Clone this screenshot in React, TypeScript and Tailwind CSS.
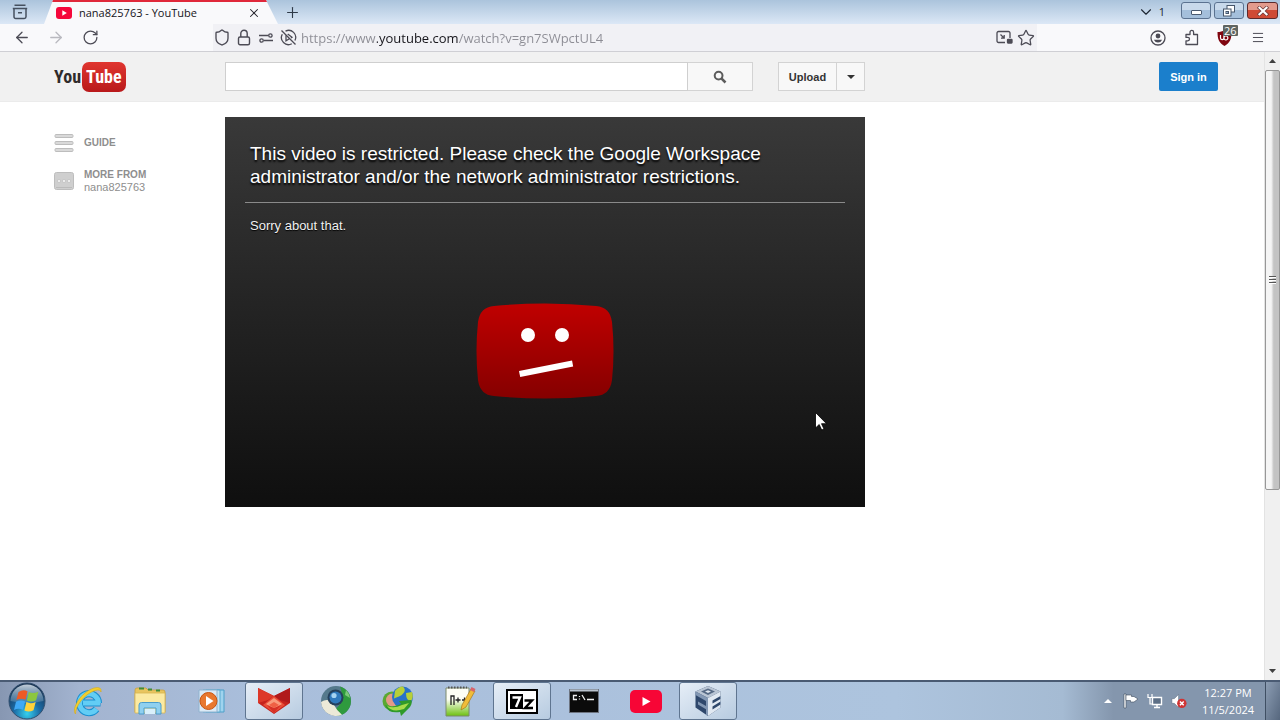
import type { ReactNode } from "react";
import {
  ArrowLeft,
  ArrowRight,
  ChevronDown,
  Lock,
  Menu,
  Plus,
  RotateCw,
  Shield,
  Star,
  X,
} from "lucide-react";

const uiFont = "font-['Open_Sans','Noto_Sans',sans-serif]";
const pageFont = "font-['Liberation_Sans',Arial,sans-serif]";

interface IconButtonProps {
  label: string;
  className?: string;
  children?: ReactNode;
}

function IconButton({ label, className = "", children }: IconButtonProps) {
  return (
    <button
      type="button"
      aria-label={label}
      className={`flex shrink-0 items-center justify-center ${className}`}
    >
      {children}
    </button>
  );
}

function TabStrip() {
  return (
    <div className="flex h-6 shrink-0 items-stretch bg-linear-to-b from-[#abc4dc] to-[#dce8f6]">
      <IconButton label="Recent browsing" className="w-10 text-[#45505f]">
        <svg width="18" height="16" viewBox="0 0 18 16" fill="none" stroke="currentColor" strokeWidth="1.5">
          <path d="M3.5 1.2h11M1.8 4.5h14.4M3 4.5v8.3a1.7 1.7 0 0 0 1.7 1.7h8.6a1.7 1.7 0 0 0 1.7-1.7V4.5M7 8.8h4" />
        </svg>
      </IconButton>
      <div className="ml-1 flex w-[234px] items-center border-t-2 border-[#e0283a] bg-[#f9f9fb] pr-4 pl-3 [clip-path:polygon(9px_0,222px_0,100%_100%,0_100%)]">
        <svg width="16" height="12" viewBox="0 0 16 12" className="shrink-0">
          <rect width="16" height="12" rx="3" fill="#f5073b" />
          <path d="M6.3 3.3v5.4l4.5-2.7z" fill="#fff" />
        </svg>
        <span className="ml-[7px] flex-1 text-[11px] whitespace-nowrap text-[#15141a]">
          nana825763 - YouTube
        </span>
        <IconButton label="Close tab" className="size-4 text-[#25242c]">
          <X size={14} strokeWidth={1.8} />
        </IconButton>
      </div>
      <IconButton label="New tab" className="ml-1 w-5 text-[#2f3a48]">
        <Plus size={17} strokeWidth={1.6} />
      </IconButton>
      <div className="flex-1" />
      <button type="button" className="mr-4 flex items-center gap-1 text-[11px] text-[#1d2632]">
        <ChevronDown size={18} strokeWidth={1.5} />
        1
      </button>
      <div className="flex gap-[3px] pt-[2px] pr-[2px]">
        <IconButton
          label="Minimize"
          className="h-[17px] w-[30px] rounded-[3px] border border-[#5b7290] bg-linear-to-b from-[#c8d9eb] from-50% to-[#a4bfdb] to-50%"
        >
          <span className="mt-1 h-[5px] w-[11px] rounded-[1px] border border-[#4a5a70] bg-white" />
        </IconButton>
        <IconButton
          label="Restore"
          className="h-[17px] w-[30px] rounded-[3px] border border-[#5b7290] bg-linear-to-b from-[#c8d9eb] from-50% to-[#a4bfdb] to-50%"
        >
          <svg width="12" height="12" viewBox="0 0 12 12" fill="#fff" stroke="#46566b">
            <rect x="4" y="0.5" width="7.5" height="6.5" />
            <rect x="0.5" y="4" width="7.5" height="7" />
            <rect x="3" y="6.5" width="2.5" height="2" fill="#8fa9c6" />
          </svg>
        </IconButton>
        <IconButton
          label="Close window"
          className="h-[17px] w-[31px] rounded-[3px] border border-[#5c2a2c] bg-linear-to-b from-[#e39a8c] from-50% to-[#cf4a35] to-50%"
        >
          <svg width="12" height="10" viewBox="0 0 12 10" strokeLinecap="square">
            <path d="M2.5 1.8l7 6.4M9.5 1.8l-7 6.4" stroke="#6f3b3b" strokeWidth="3.6" />
            <path d="M2.5 1.8l7 6.4M9.5 1.8l-7 6.4" stroke="#fff" strokeWidth="2.2" />
          </svg>
        </IconButton>
      </div>
    </div>
  );
}

function AddressBar() {
  return (
    <div className="flex h-7 shrink-0 items-stretch border-b border-[#cfcfd4] bg-[#f9f9fb] text-[#4c4b55]">
      <div className="flex w-[213px] shrink-0 items-center pl-[13px]">
        <IconButton label="Back" className="w-[18px]">
          <ArrowLeft size={19} strokeWidth={1.7} />
        </IconButton>
        <IconButton label="Forward" className="ml-4 w-[18px] text-[#b9b9bf]">
          <ArrowRight size={19} strokeWidth={1.7} />
        </IconButton>
        <IconButton label="Reload" className="ml-4 w-[18px]">
          <RotateCw size={17} strokeWidth={1.8} />
        </IconButton>
      </div>
      <div className="flex flex-1 items-center gap-1 bg-[#f1f1f5]">
        <IconButton label="Tracking protection" className="w-[18px]">
          <Shield size={19} strokeWidth={1.8} />
        </IconButton>
        <IconButton label="Site information" className="w-[18px]">
          <svg width="14" height="17" viewBox="0 0 14 17" fill="none" stroke="currentColor" strokeWidth="1.4">
            <rect x="1.5" y="8" width="11" height="7.8" rx="1.5" />
            <path d="M3.8 8V4.4a3.2 3.2 0 0 1 6.4 0V8" />
          </svg>
        </IconButton>
        <IconButton label="Permissions" className="w-[18px]">
          <svg width="16" height="12" viewBox="0 0 16 12" fill="none" stroke="currentColor" strokeWidth="1.3">
            <path d="M1 3.5h9M6 8.5h9" />
            <circle cx="12.4" cy="3.5" r="1.7" />
            <circle cx="3.6" cy="8.5" r="1.7" />
          </svg>
        </IconButton>
        <IconButton label="Autoplay blocked" className="w-[18px]">
          <svg width="17" height="17" viewBox="0 0 17 17" fill="none" stroke="currentColor" strokeWidth="1.3">
            <path d="M5.5 2.1A7 7 0 0 1 14.900 11.500M11.800 14.700A7 7 0 0 1 2.300 5.200M1.500 1.500l14 14" />
            <path d="M6 6.200v5.600l3.400-2.100M7.700 5l4.300 3.200-1 .8" />
          </svg>
        </IconButton>
        {/* the host name is darker than the rest of the address */}
        <input
          type="text"
          aria-label="Address"
          defaultValue="https://www.youtube.com/watch?v=gn7SWpctUL4"
          className="min-w-0 flex-1 bg-[linear-gradient(90deg,#8c8c94_76px,#15141a_76px,#15141a_158px,#8c8c94_158px)] bg-clip-text pt-[2px] text-[13px] text-transparent outline-none"
        />
        <IconButton label="Picture in picture" className="w-[18px]">
          <svg width="17" height="15" viewBox="0 0 17 15" fill="none" stroke="currentColor" strokeWidth="1.3">
            <path d="M9 12.500H2.500A1.500 1.500 0 0 1 1 11V3a1.500 1.500 0 0 1 1.500-1.500h10A1.500 1.500 0 0 1 14 3v5M4.500 4.500l3.500 3.500M8.200 5v3.200H5" />
            <rect x="11.500" y="9.500" width="4.500" height="3.500" rx="0.500" fill="currentColor" />
          </svg>
        </IconButton>
        <IconButton label="Bookmark this page" className="mr-[2px] w-[18px]">
          <Star size={18} strokeWidth={1.7} />
        </IconButton>
      </div>
      <div className="flex w-[243px] shrink-0 items-center justify-end gap-4 pr-[15px]">
        <IconButton label="Account" className="w-[18px]">
          <svg width="16" height="16" viewBox="0 0 16 16" fill="none" stroke="currentColor" strokeWidth="1.300">
            <circle cx="8" cy="8" r="7" />
            <circle cx="8" cy="6" r="2.400" fill="currentColor" stroke="none" />
            <path d="M3.800 9.800h8.400a4.600 4.600 0 0 1-8.400 0z" fill="currentColor" stroke="none" />
          </svg>
        </IconButton>
        <IconButton label="Extensions" className="w-[18px]">
          <svg width="16" height="17" viewBox="0 0 16 17" fill="none" stroke="currentColor" strokeWidth="1.300">
            <path d="M2 15.500v-3.700h1.800a1.700 1.700 0 0 0 0-3.400H2V5.500h4V3.200a1.800 1.800 0 0 1 3.600 0v2.300h3.900v10z" strokeLinejoin="round" />
          </svg>
        </IconButton>
        <div className="relative flex w-[18px] shrink-0">
          <IconButton label="uBlock Origin" className="w-[15px]">
            <svg width="15" height="16" viewBox="0 0 14 16">
              <path d="M7 0c2 1.500 4.500 2 7 2 0 7-1.500 11-7 14C1.500 13 0 9 0 2c2.500 0 5-.5 7-2z" fill="#800610" />
              <path d="M3 5v3a1.700 1.700 0 0 0 3.400 0V5M6.400 8a2 2 0 1 0 4 0 2 2 0 0 0-4 0" fill="none" stroke="#fff" strokeWidth="1.200" />
            </svg>
          </IconButton>
          <span className="absolute -top-[5px] left-[6px] rounded-[1px] bg-[#5f6561] px-[1px] text-[11px] leading-[11px] text-white">
            26
          </span>
        </div>
        <IconButton label="Open application menu" className="w-[14px]">
          <Menu size={17} strokeWidth={1.700} />
        </IconButton>
      </div>
    </div>
  );
}

function SiteHeader() {
  return (
    <header className="flex h-[50px] shrink-0 items-center border-b border-[#ebebeb] bg-[#f1f1f1] pr-[46px] pl-[54px]">
      <a
        href="#"
        aria-label="YouTube home"
        className="flex w-[171px] shrink-0 items-center gap-[1px] font-['Liberation_Sans_Narrow','Roboto_Condensed',sans-serif] text-[18px] leading-[30px] font-bold"
      >
        <span className="text-[#2f2b2b]">You</span>
        <span className="rounded-[7px] bg-linear-to-b from-[#e0352f] to-[#b9191b] px-1 text-white">
          Tube
        </span>
      </a>
      <form className="flex h-[29px] w-[528px]" onSubmit={(e) => e.preventDefault()}>
        <input
          type="text"
          aria-label="Search"
          className="min-w-0 flex-1 border border-[#cfcfcf] bg-white px-2 text-sm outline-none"
        />
        <button
          type="submit"
          aria-label="Submit search"
          className="flex w-[65px] items-center justify-center border border-l-0 border-[#d3d3d3] bg-[#f8f8f8]"
        >
          <svg width="14" height="14" viewBox="0 0 14 14" fill="none" stroke="#5c5c5c">
            <circle cx="5.600" cy="5.600" r="3.900" strokeWidth="2" />
            <path d="M8.600 8.600l3.900 3.900" strokeWidth="2.600" />
          </svg>
        </button>
      </form>
      <div className="ml-[25px] flex h-[29px] shrink-0 border border-[#d3d3d3] bg-[#f8f8f8]">
        <button type="button" className="w-[58px] border-r border-[#d3d3d3] pt-px text-[11px] font-bold text-[#333]">
          Upload
        </button>
        <IconButton label="Upload options" className="w-[27px]">
          <svg width="8" height="4" viewBox="0 0 8 4">
            <path d="M0 0h8L4 4z" fill="#333" />
          </svg>
        </IconButton>
      </div>
      <button
        type="button"
        className="ml-auto h-[29px] w-[59px] shrink-0 rounded-[2px] bg-[#1b7fcc] pt-px text-[11px] font-bold text-white"
      >
        Sign in
      </button>
    </header>
  );
}

function GuideNav() {
  return (
    <nav className="flex w-[171px] shrink-0 flex-col gap-4 pt-4 text-[11px] leading-3 text-[#8e8e8e]">
      <a href="#" className="flex h-5 items-center gap-[10px] text-[10px] font-bold">
        <svg width="20" height="18" viewBox="0 0 20 18" fill="#d9d9d9" stroke="#bdbdbd">
          <rect x="1" y="0.500" width="18" height="3" rx="1" />
          <rect x="1" y="7.500" width="18" height="3" rx="1" />
          <rect x="1" y="14.500" width="18" height="3" rx="1" />
        </svg>
        GUIDE
      </a>
      <a href="#" className="flex items-center gap-[10px]">
        <svg width="20" height="18" viewBox="0 0 20 18">
          <rect x="0.500" y="0.500" width="19" height="17" rx="2" fill="#cfcfcf" stroke="#bdbdbd" />
          <path d="M2 15.500h16" stroke="#bbb" />
          <circle cx="5" cy="9" r="1.700" fill="#ececec" stroke="#b3b3b3" strokeWidth="0.500" />
          <circle cx="10" cy="9" r="1.700" fill="#ececec" stroke="#b3b3b3" strokeWidth="0.500" />
          <circle cx="15" cy="9" r="1.700" fill="#ececec" stroke="#b3b3b3" strokeWidth="0.500" />
        </svg>
        <span>
          <span className="block text-[10px] leading-3 font-bold">MORE FROM</span>
          <span className="block">nana825763</span>
        </span>
      </a>
    </nav>
  );
}

function Player() {
  return (
    <section className="flex h-[390px] w-[640px] shrink-0 flex-col bg-linear-to-b from-[#393939] to-[#0f0f0f] px-5 pt-[25px] text-white">
      <h1 className="border-b border-[#8a8a8a] px-[5px] pb-[14px] text-[19px] leading-[23px] [text-shadow:0_2px_2px_#000]">
        This video is restricted. Please check the Google Workspace
        <br />
        administrator and/or the network administrator restrictions.
      </h1>
      <p className="px-[5px] pt-[15px] text-[13px] leading-4 text-[#f1f1f1] [text-shadow:0_1px_1px_#000]">
        Sorry about that.
      </p>
      <svg width="138" height="98" viewBox="0 0 138 98" className="mt-[68px] self-center">
        <defs>
          <linearGradient id="face" x1="0" y1="0" x2="0" y2="1">
            <stop offset="0" stopColor="#c00000" />
            <stop offset="1" stopColor="#850000" />
          </linearGradient>
        </defs>
        <path
          d="M18 4Q69-1 120 4Q134 5 136 20Q139 49 136 78Q134 93 120 94Q69 99 18 94Q4 93 2 78Q-1 49 2 20Q4 5 18 4z"
          fill="url(#face)"
        />
        <circle cx="52" cy="33" r="7" fill="#fff" />
        <circle cx="86" cy="33" r="7" fill="#fff" />
        <path d="M43 69l53-10.500 1.200 6L44.200 75z" fill="#fff" />
      </svg>
    </section>
  );
}

function Scrollbar() {
  return (
    <div className="flex w-4 shrink-0 flex-col border-l border-[#e3e3e3] bg-[#f0f0f0]">
      <IconButton label="Scroll up" className="h-[18px]">
        <svg width="7" height="4" viewBox="0 0 7 4">
          <path d="M0 4h7L3.500 0z" fill="#404040" />
        </svg>
      </IconButton>
      <div className="flex flex-1 flex-col">
        <div className="flex h-[71%] flex-col items-center justify-center gap-[1px] rounded-[2px] border border-[#979797] bg-linear-to-r from-[#f5f5f5] from-40% to-[#c3c3c3] to-60%">
          <span className="h-[2px] w-[7px] border-b border-white bg-[#555]" />
          <span className="h-[2px] w-[7px] border-b border-white bg-[#555]" />
          <span className="h-[2px] w-[7px] border-b border-white bg-[#555]" />
        </div>
      </div>
      <IconButton label="Scroll down" className="h-[18px]">
        <svg width="7" height="4" viewBox="0 0 7 4">
          <path d="M0 0h7L3.500 4z" fill="#404040" />
        </svg>
      </IconButton>
    </div>
  );
}

function StartOrb() {
  return (
    <svg width="38" height="38" viewBox="0 0 38 38">
      <defs>
        <radialGradient id="orb" cx="0.5" cy="0.85" r="0.8">
          <stop offset="0" stopColor="#35d0ee" />
          <stop offset="0.45" stopColor="#1b6ca6" />
          <stop offset="1" stopColor="#16304f" />
        </radialGradient>
        <linearGradient id="gloss" x1="0" y1="0" x2="0" y2="1">
          <stop offset="0" stopColor="#dfe9f2" stopOpacity="0.85" />
          <stop offset="1" stopColor="#8fb0c8" stopOpacity="0.3" />
        </linearGradient>
      </defs>
      <circle cx="19" cy="19" r="18" fill="url(#orb)" stroke="#33506f" />
      <path d="M2.5 19a16.5 16.5 0 0 1 33 0Q19 23 2.5 19z" fill="url(#gloss)" />
      <path d="M10.500 10q4.500-3 9-.8l-2 8.600q-4.500-2-9.200.3z" fill="#ee5a24" />
      <path d="M20.800 10q4.500 2.200 9.500-.3l-2.200 8.600q-4.500 2.300-9.300.2z" fill="#8cc63f" />
      <path d="M8 19.800q4.500-2.500 9.100-.4L15 27.800q-4.500-2.200-9 .2z" fill="#3fa9f5" />
      <path d="M18.400 20.100q4.500 2.200 9.300-.2l-2.200 8.400q-4.500 2.400-9.100.3z" fill="#ffd23a" />
    </svg>
  );
}

function IeIcon() {
  return (
    <svg width="32" height="32" viewBox="0 0 32 32" fill="none">
      <path d="M28.500 18H11M26.500 18a9.500 9.500 0 1 0-2 6" stroke="#1a8fd0" strokeWidth="7" />
      <path d="M28 18H11M26.500 18a9.500 9.500 0 1 0-2 6" stroke="#62cdf5" strokeWidth="5" />
      <path d="M3.500 29C-1 24 9 7 22 3q8-2 7 4-.5-3-6-1.500C12 9 3 22 3.500 29z" fill="#f3cf2e" stroke="#d6a91a" strokeWidth="0.6" />
    </svg>
  );
}

function ExplorerIcon() {
  return (
    <svg width="34" height="30" viewBox="0 0 34 30">
      <path d="M2 4q0-2 2-2h9l2 2h15q2 0 2 2v20H2z" fill="#e8c55f" stroke="#c9a03c" strokeWidth="0.8" />
      <path d="M6 2.500h5M15 3.500h4M23 4.500h4" stroke="#3f8d3a" strokeWidth="2" />
      <path d="M2 7h30v20H2z" fill="#fbeaa2" stroke="#d8b552" strokeWidth="0.8" />
      <path d="M6 28V19q0-2.500 2.500-2.500h17q2.500 0 2.500 2.500v9h-5v-6H11v6z" fill="#8fd0ef" stroke="#4a9ccb" />
      <path d="M12 23h10v5H12z" fill="#d9f0fb" />
    </svg>
  );
}

function MediaPlayerIcon() {
  return (
    <svg width="28" height="28" viewBox="0 0 28 28">
      <path d="M8 3h18v22H8z" fill="#9fd3ee" stroke="#4c9fc9" />
      <path d="M5 3h17v22H5z" fill="#c3e5f5" stroke="#5aa9cf" />
      <path d="M1 3h18v22H1z" fill="#dbeaf6" stroke="#8fb2cf" />
      <circle cx="10.500" cy="14" r="8.500" fill="#e8782f" stroke="#c95510" />
      <path d="M8 9v10l7.500-5z" fill="#fff" />
    </svg>
  );
}

function FoxIcon() {
  return (
    <svg width="34" height="28" viewBox="0 0 34 28">
      <path d="M1 1l16 8 16-8v15l-16 11L1 16z" fill="#c5231d" />
      <path d="M1 1l16 8-6 4-10 3z" fill="#dd3829" />
      <path d="M33 1L17 9l6 4 10 3z" fill="#b01a1c" />
      <path d="M17 9l11 9-11 8-11-8z" fill="#ea4c37" />
      <path d="M17 11l8 6-8 5-8-5z" fill="#f99b7c" />
      <path d="M17 15l5 3-5 3-5-3z" fill="#ef6044" />
      <path d="M17 21l7-3-7 8-7-8z" fill="#d63126" />
    </svg>
  );
}

function ProgramGlobeIcon() {
  return (
    <svg width="32" height="32" viewBox="0 0 32 32">
      <circle cx="16" cy="16" r="15" fill="#55798c" />
      <path d="M20 1.500a15 15 0 0 1-2 29.300Q12 30 13 26 26 18 20 1.500z" fill="#2f9a3e" />
      <path d="M26 5a15 15 0 0 1 4 8l-5-3z" fill="#7cc97a" />
      <path d="M1 17q8-5 13 3 3 6 8 9.700A15 15 0 0 1 1 17z" fill="#ece9d8" />
      <circle cx="15.500" cy="12.500" r="8" fill="#25405c" />
      <circle cx="15.500" cy="12.500" r="6" fill="#2f79bd" />
      <circle cx="14" cy="10.500" r="2.600" fill="#a5d3f2" />
    </svg>
  );
}

function DownloadManagerIcon() {
  return (
    <svg width="32" height="32" viewBox="0 0 32 32">
      <circle cx="10" cy="16" r="9.500" fill="#5aa832" />
      <circle cx="10.500" cy="15" r="6.500" fill="#e49a86" />
      <circle cx="20.500" cy="12" r="10.500" fill="#2a72c8" />
      <path d="M13 6q4-5 8-4.500 3 3 1 6t-5 4-5 2zM24 8l6-1q2 5-1 9-5 0-5-8z" fill="#b8cf38" />
      <path d="M3 20q6 4 16-1l-2-3 12-1q2 2-1 7l-9 9-1-4Q6 29 3 20z" fill="#2f9a2a" />
      <path d="M5 21q7 3 15-1l7-2-5 6Q10 28 5 21z" fill="#a6dc4a" />
    </svg>
  );
}

function NotepadIcon() {
  return (
    <svg width="32" height="32" viewBox="0 0 32 32">
      <defs>
        <linearGradient id="note" x1="0" y1="0" x2="0" y2="1">
          <stop offset="0.4" stopColor="#fdfef5" />
          <stop offset="1" stopColor="#6cc010" />
        </linearGradient>
      </defs>
      <path d="M2 3h23v28H2z" fill="url(#note)" stroke="#7c8a6d" />
      <path d="M4 2.500h19" stroke="#555" strokeWidth="2" strokeDasharray="1.5 1.5" />
      <path d="M7 20v-9h3v9M11.500 15h5M14 12.500v5M18 15h5M20.500 12.500v5" stroke="#222" strokeWidth="1.300" fill="none" />
      <path d="M17 25l1-5L27 4l4 2-9 16z" fill="#f0bd3a" stroke="#a87a1b" strokeWidth="0.7" />
      <path d="M26 5l1.500-3 4 2L30 7z" fill="#d7636b" />
    </svg>
  );
}

function SevenZipIcon() {
  return (
    <svg width="32" height="25" viewBox="0 0 32 25">
      <rect x="1" y="1" width="30" height="23" fill="#fff" stroke="#000" strokeWidth="2" />
      <rect x="4" y="5" width="13" height="15" fill="#000" />
      <path d="M6.500 8.500h7.500L10 18" fill="none" stroke="#fff" strokeWidth="2.4" />
      <path d="M18.500 11.500H26l-7 7.500h8" fill="none" stroke="#000" strokeWidth="2.4" />
    </svg>
  );
}

function ConsoleIcon() {
  return (
    <svg width="30" height="24" viewBox="0 0 30 24">
      <rect x="0.5" y="0.5" width="29" height="23" fill="#0b0b0b" stroke="#6d7480" />
      <path d="M1 1.500h28" stroke="#b9c2cd" strokeWidth="2" />
      <path d="M8 6.500H4.500v4H8M10.500 7v1M10.500 9.500v1M13 6l3 5M18 10.500h7" stroke="#eee" strokeWidth="1.300" fill="none" />
    </svg>
  );
}

function YouTubeIcon() {
  return (
    <svg width="32" height="23" viewBox="0 0 32 23">
      <rect width="32" height="23" rx="5" fill="#f70636" />
      <path d="M12.500 7v9l8-4.500z" fill="#fff" />
    </svg>
  );
}

function VirtualBoxIcon() {
  return (
    <svg width="28" height="32" viewBox="0 0 28 32">
      <path d="M14 1l12.500 5.500v16L14 31 1.500 22.500v-16z" fill="#2f486c" />
      <path d="M14 1l12.500 5.500L14 13 1.500 6.500z" fill="#b9c5d4" />
      <path d="M14 3.500l7 3-7 3.500-7-3.500z" fill="#566a85" />
      <path d="M14 5.300l3 1.300-3 1.500-3-1.500z" fill="#dce4ee" />
      <path d="M1.500 6.500L14 13v18l-2-1.300v-5.500l-8-4.700v-3l8 4.500v-5L1.500 10z" fill="#8398b4" />
      <path d="M26.500 6.500L14 13v18l12.500-8.500v-3l-8 5v-3l8-5v-2.500l-8 4.500v-3l8-4.500z" fill="#e1e9f2" />
    </svg>
  );
}

const pinned = [
  { name: "Internet Explorer", icon: <IeIcon />, open: false },
  { name: "Windows Explorer", icon: <ExplorerIcon />, open: false },
  { name: "Windows Media Player", icon: <MediaPlayerIcon />, open: false },
  { name: "Browser", icon: <FoxIcon />, open: true },
  { name: "Web browser", icon: <ProgramGlobeIcon />, open: false },
  { name: "Download manager", icon: <DownloadManagerIcon />, open: false },
  { name: "Text editor", icon: <NotepadIcon />, open: false },
  { name: "7-Zip", icon: <SevenZipIcon />, open: true },
  { name: "Command Prompt", icon: <ConsoleIcon />, open: false },
  { name: "YouTube", icon: <YouTubeIcon />, open: false },
  { name: "VirtualBox", icon: <VirtualBoxIcon />, open: true },
];

function Taskbar() {
  return (
    <footer className="flex h-10 shrink-0 items-stretch border-t-2 border-[#4a5b73] bg-[linear-gradient(90deg,#8797b2,#a3b4d0_80px,#a9bedb_250px,#adc4de_70%,#a5bbd3_83%,#8496ad_87%)]">
      <IconButton label="Start" className="w-[54px]">
        <StartOrb />
      </IconButton>
      <div className="flex gap-1 pl-[5px]">
        {pinned.map((app) => (
          <IconButton
            key={app.name}
            label={app.name}
            className={
              app.open
                ? "w-[58px] rounded-[3px] border border-[#5f7590] bg-linear-to-br from-[#e6eef7] to-[#b7cbe0]"
                : "w-[58px]"
            }
          >
            {app.icon}
          </IconButton>
        ))}
      </div>
      <div className="ml-auto flex items-center gap-2 text-white">
        <IconButton label="Show hidden icons" className="w-[14px]">
          <svg width="8" height="4" viewBox="0 0 8 4">
            <path d="M0 4h8L4 0z" fill="#fff" />
          </svg>
        </IconButton>
        <IconButton label="Action Center" className="w-4">
          <svg width="16" height="16" viewBox="0 0 16 16" fill="#fff" stroke="#3d4a5c" strokeWidth="0.6">
            <path d="M1 1h2v14H1z" />
            <path d="M3 2h5.500v1.500H11l4 2.500-4 3H7.500V7.500H3z" />
          </svg>
        </IconButton>
        <IconButton label="Network" className="w-4">
          <svg width="16" height="16" viewBox="0 0 16 16" fill="none">
            <path d="M5.500 4.500h9v7h-9z" fill="#5d6f86" stroke="#fff" strokeWidth="1.4" />
            <path d="M7 14.500h6M10 12v2.500" stroke="#fff" strokeWidth="1.4" />
            <path d="M1 1v3.500h4V1M3 4.500V11h2" stroke="#fff" strokeWidth="1.2" />
          </svg>
        </IconButton>
        <IconButton label="Volume muted" className="w-4">
          <svg width="17" height="16" viewBox="0 0 17 16">
            <path d="M1 5.500h2.500L8 1v14l-4.500-4.500H1z" fill="#fff" stroke="#5b6a7d" strokeWidth="0.5" />
            <circle cx="11.500" cy="10.500" r="5" fill="#cf3434" />
            <path d="M9.500 8.500l4 4M13.500 8.500l-4 4" stroke="#fff" strokeWidth="1.600" />
          </svg>
        </IconButton>
        <button type="button" className="ml-1 w-[58px] text-center text-[11px] leading-[17px]">
          12:27 PM
          <br />
          11/5/2024
        </button>
        <IconButton
          label="Show desktop"
          className="w-[15px] self-stretch border-l border-[#3f4f63] bg-linear-to-br from-[#8c9db3] to-[#56677e]"
        />
      </div>
    </footer>
  );
}

export default function App() {
  return (
    <div className={`relative flex h-screen flex-col overflow-hidden bg-white ${uiFont}`}>
      <TabStrip />
      <AddressBar />
      <div className={`flex min-h-0 flex-1 ${pageFont}`}>
        <div className="flex min-w-0 flex-1 flex-col">
          <SiteHeader />
          <main className="flex flex-1 items-start pt-[15px] pl-[54px]">
            <GuideNav />
            <Player />
          </main>
        </div>
        <Scrollbar />
      </div>
      <Taskbar />
      <svg width="12" height="19" viewBox="0 0 12 19" className="absolute top-[412px] left-[815px]">
        <path d="M0.500 0.500v15.500l3.700-3.500 2.500 5.500 2.300-1-2.500-5.300h5z" fill="#fff" stroke="#000" strokeWidth="0.8" />
      </svg>
    </div>
  );
}
